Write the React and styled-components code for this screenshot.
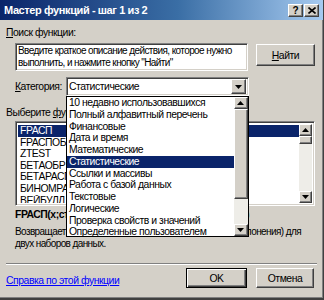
import styled, { createGlobalStyle } from "styled-components";

const GlobalStyle = createGlobalStyle`
  html, body { margin: 0; padding: 0; background: #d4d0c8; }
  body {
    font-family: "Liberation Sans", Arial, sans-serif;
    font-size: 10.4px;
    letter-spacing: -0.45px;
    color: #000;
  }
  * { box-sizing: border-box; }
`;

const sunken = `
  background: #fff;
  border: 1px solid;
  border-color: #808080 #fff #fff #808080;
  box-shadow: inset 1px 1px 0 #404040, inset -1px -1px 0 #d4d0c8;
`;

const raised = `
  background: #d4d0c8;
  border: 1px solid;
  border-color: #fff #404040 #404040 #fff;
  box-shadow: inset -1px -1px 0 #808080;
`;

const tightText = `
  font-size: 10px;
  letter-spacing: -0.6px;
`;

const Window = styled.div`
  position: relative;
  width: 324px;
  height: 300px;
  overflow: hidden;
  display: flex;
  flex-direction: column;
  background: #d4d0c8;
  border-right: 1px solid #404040;
  border-bottom: 2px solid #404040;
  box-shadow: inset -1px -1px 0 #808080;
`;

const TitleBar = styled.div`
  height: 20px;
  display: flex;
  align-items: center;
  justify-content: space-between;
  padding: 0 4px 0 4px;
  background: linear-gradient(90deg, #0a246a 0%, #3a6ea5 55%, #a6caf0 100%);
  color: #fff;
  font-weight: bold;
  font-size: 11px;
  letter-spacing: -0.4px;
`;

const CaptionButtons = styled.div`
  display: flex;
  gap: 1px;
`;

const CaptionButton = styled.div`
  ${raised}
  width: 15px;
  height: 13px;
  display: flex;
  align-items: center;
  justify-content: center;
  color: #000;
  font-size: 10px;
  font-weight: bold;
  letter-spacing: 0;
`;

const Body = styled.div`
  display: flex;
  flex-direction: column;
  padding: 0 6px;
`;

const Label = styled.div`
  line-height: 12px;
  margin-top: ${({ $top }) => $top}px;
  white-space: nowrap;
  u { text-decoration: underline; }
`;

const SearchRow = styled.div`
  display: flex;
  align-items: flex-start;
  margin-top: 4px;
  padding-left: 9px;
  gap: 8px;
`;

const SearchBox = styled.div`
  ${sunken}
  ${tightText}
  width: 233px;
  flex-shrink: 0;
  height: 28px;
  padding: 1px 2px;
  line-height: 12px;
  white-space: nowrap;
  overflow: hidden;
`;

const Button = styled.div`
  ${raised}
  width: ${({ $w }) => $w}px;
  height: ${({ $h }) => $h || 22}px;
  margin-top: ${({ $mt }) => $mt || 0}px;
  flex-shrink: 0;
  display: flex;
  align-items: center;
  justify-content: center;
  ${({ $default }) =>
    $default &&
    `border: 1px solid #000; box-shadow: inset 1px 1px 0 #fff, inset -1px -1px 0 #404040, inset -2px -2px 0 #808080;`}
  u { text-decoration: underline; }
`;

const CategoryRow = styled.div`
  display: flex;
  align-items: center;
  margin-top: 6px;
  padding-left: 9px;
  gap: 4px;
`;

const SelectWrap = styled.div`
  position: relative;
  width: 183px;
`;

const Select = styled.div`
  ${sunken}
  height: 19px;
  display: flex;
  align-items: center;
  justify-content: space-between;
  padding: 0 2px 0 2px;
`;

const ArrowButton = styled.div`
  ${raised}
  width: ${({ $w }) => $w || 14}px;
  height: ${({ $h }) => $h || 14}px;
  display: flex;
  align-items: center;
  justify-content: center;
  flex-shrink: 0;
`;

const Dropdown = styled.div`
  position: absolute;
  top: 100%;
  left: 0;
  width: 183px;
  height: 141px;
  background: #fff;
  border: 1px solid #000;
  display: flex;
  z-index: 10;
`;

const Items = styled.div`
  flex: 1;
  padding-top: ${({ $pt }) => $pt || 0}px;
  overflow: hidden;
`;

const Item = styled.div`
  height: ${({ $h }) => $h}px;
  line-height: ${({ $h }) => $h}px;
  padding-left: 2px;
  white-space: nowrap;
  overflow: hidden;
  background: ${({ $selected }) => ($selected ? "#0a246a" : "transparent")};
  color: ${({ $selected }) => ($selected ? "#fff" : "#000")};
`;

const ScrollBar = styled.div`
  width: ${({ $w }) => $w}px;
  display: flex;
  flex-direction: column;
  background: #eeede8;
`;

const Thumb = styled.div`
  ${raised}
  height: ${({ $h }) => $h}px;
`;

const Track = styled.div`
  flex: 1;
`;

const ListBox = styled.div`
  ${sunken}
  margin: 2px 0 0 9px;
  width: 300px;
  height: 85px;
  padding: 2px;
  display: flex;
`;

const Signature = styled.div`
  margin: 3px 0 0 9px;
  font-weight: bold;
  line-height: 12px;
  white-space: nowrap;
`;

const Description = styled.div`
  ${tightText}
  margin: 5px 0 0 9px;
  line-height: 12px;
  white-space: nowrap;
`;

const Separator = styled.div`
  margin-top: 13px;
  height: 2px;
  border-top: 1px solid #808080;
  border-bottom: 1px solid #fff;
`;

const Footer = styled.div`
  display: flex;
  align-items: center;
  margin-top: 3px;
`;

const HelpLink = styled.a`
  color: #0000ff;
  text-decoration: underline;
  margin-right: auto;
  margin-top: 4px;
`;

const FooterButtons = styled.div`
  display: flex;
  gap: 9px;
  margin-right: 3px;
`;

const Tri = ({ up }) => (
  <svg width="7" height="4" viewBox="0 0 7 4">
    <path d={up ? "M3.5 0 L7 4 L0 4 Z" : "M0 0 L7 0 L3.5 4 Z"} fill="#000" />
  </svg>
);

const categories = [
  "10 недавно использовавшихся",
  "Полный алфавитный перечень",
  "Финансовые",
  "Дата и время",
  "Математические",
  "Статистические",
  "Ссылки и массивы",
  "Работа с базой данных",
  "Текстовые",
  "Логические",
  "Проверка свойств и значений",
  "Определенные пользователем",
];

const functions = ["FРАСП", "FРАСПОБР", "ZTEST", "БЕТАОБР", "БЕТАРАСП", "БИНОМРАСП", "ВЕЙБУЛЛ"];

export default function App() {
  return (
    <>
      <GlobalStyle />
      <Window>
        <TitleBar>
          <span>Мастер функций - шаг 1 из 2</span>
          <CaptionButtons>
            <CaptionButton>?</CaptionButton>
            <CaptionButton>
              <svg width="8" height="7" viewBox="0 0 8 7">
                <path d="M0.5 0.5 L7.5 6.5 M7.5 0.5 L0.5 6.5" stroke="#000" strokeWidth="1.6" />
              </svg>
            </CaptionButton>
          </CaptionButtons>
        </TitleBar>

        <Body>
          <Label $top={7}>
            <u>П</u>оиск функции:
          </Label>
          <SearchRow>
            <SearchBox>
              Введите краткое описание действия, которое нужно
              <br />
              выполнить, и нажмите кнопку "Найти"
            </SearchBox>
            <Button $w={59} $h={22} $mt={1}>
              <span>
                <u>Н</u>айти
              </span>
            </Button>
          </SearchRow>

          <CategoryRow>
            <span>
              <u>К</u>атегория:
            </span>
            <SelectWrap>
              <Select>
                <span>Статистические</span>
                <ArrowButton $w={15} $h={15}>
                  <Tri />
                </ArrowButton>
              </Select>
              <Dropdown>
                <Items $pt={0}>
                  {categories.map((c) => (
                    <Item key={c} $h={11.75} $selected={c === "Статистические"}>
                      {c}
                    </Item>
                  ))}
                </Items>
                <ScrollBar $w={14}>
                  <ArrowButton $w={14} $h={12}>
                    <Tri up />
                  </ArrowButton>
                  <Thumb $h={90} />
                  <Track />
                  <ArrowButton $w={14} $h={12}>
                    <Tri />
                  </ArrowButton>
                </ScrollBar>
              </Dropdown>
            </SelectWrap>
          </CategoryRow>

          <Label $top={11}>
            Выберите <u>ф</u>ункцию:
          </Label>
          <ListBox>
            <Items $pt={1}>
              {functions.map((f, i) => (
                <Item key={f} $h={11.6} $selected={i === 0}>
                  {f}
                </Item>
              ))}
            </Items>
            <ScrollBar $w={13}>
              <ArrowButton $w={13} $h={12}>
                <Tri up />
              </ArrowButton>
              <Thumb $h={8} />
              <Track />
              <ArrowButton $w={13} $h={12}>
                <Tri />
              </ArrowButton>
            </ScrollBar>
          </ListBox>

          <Signature>FРАСП(x;степени_свободы1;степени_свободы2)</Signature>
          <Description>
            Возвращает F-распределение вероятности (степень отклонения) для
            <br />
            двух наборов данных.
          </Description>

          <Separator />

          <Footer>
            <HelpLink href="#">Справка по этой функции</HelpLink>
            <FooterButtons>
              <Button $w={61} $h={20} $default>
                OK
              </Button>
              <Button $w={58} $h={20}>
                Отмена
              </Button>
            </FooterButtons>
          </Footer>
        </Body>
      </Window>
    </>
  );
}
